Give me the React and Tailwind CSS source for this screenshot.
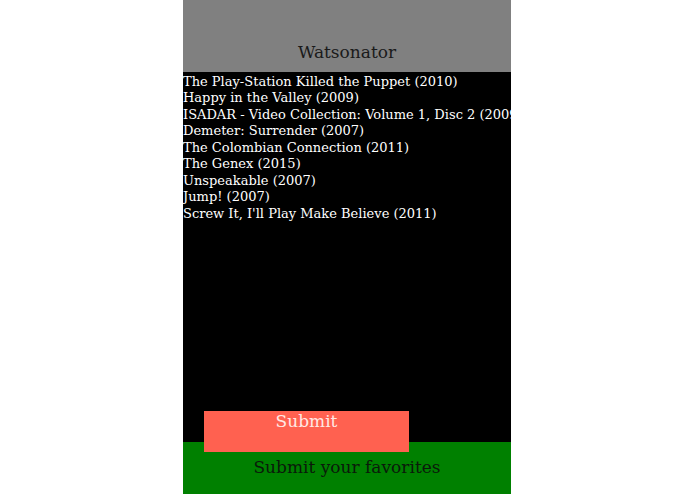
import React from 'react';

const movies = [
  'The Play-Station Killed the Puppet (2010)',
  'Happy in the Valley (2009)',
  'ISADAR - Video Collection: Volume 1, Disc 2 (2009)',
  'Demeter: Surrender (2007)',
  'The Colombian Connection (2011)',
  'The Genex (2015)',
  'Unspeakable (2007)',
  'Jump! (2007)',
  "Screw It, I'll Play Make Believe (2011)",
];

const App = () => {
  return (
    <div className="bg-white w-full h-[494px] flex font-['DejaVu_Serif',serif]">
      <div className="ml-[183px] w-[328px] h-full flex flex-col">
        {/* Header */}
        <div className="h-[72px] bg-[#808080] flex items-end justify-center pb-[10px]">
          <h1 className="text-[17px] leading-[20px] text-[#1a1a1a]">Watsonator</h1>
        </div>

        {/* Movie list */}
        <div className="flex-1 bg-black flex flex-col">
          <ul className="pt-[1.5px] text-[13px] leading-[16.5px] text-white whitespace-nowrap overflow-hidden">
            {movies.map((m) => (
              <li key={m}>{m}</li>
            ))}
          </ul>
          <div className="mt-auto pl-[21px] -mb-[10px] relative z-10">
            <button className="w-[205px] h-[41px] bg-[#ff6150] text-[#ffe8e4] text-[17px] leading-[20px] flex justify-center items-start pt-0">
              Submit
            </button>
          </div>
        </div>

        {/* Footer */}
        <div className="h-[52px] bg-[#008000] flex justify-center items-start pt-[15px]">
          <span className="text-[17px] leading-[20px] text-[#0a1a0a]">Submit your favorites</span>
        </div>
      </div>
    </div>
  );
};

export default App;
